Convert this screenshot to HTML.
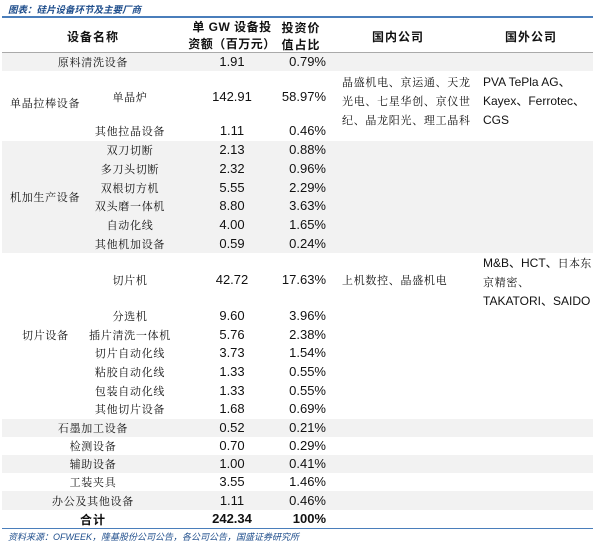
<!DOCTYPE html>
<html><head><meta charset="utf-8"><style>
body{margin:0;width:600px;height:546px;background:#fff;font-family:"Liberation Sans","Noto Sans CJK SC",sans-serif;font-size:12px;color:#111;position:relative;overflow:hidden}
.a{position:absolute;white-space:nowrap}
.g{position:absolute;left:2px;width:591px;background:#f2f2f2}
.c{transform:translateX(-50%)}
.r{transform:translateX(-100%)}
.cj{font-family:"Noto Serif CJK SC","Noto Sans CJK SC",serif;font-size:11px;letter-spacing:0.7px}
</style></head><body>
<div class="a" style="left:8px;top:2px;font-size:9.5px;color:#1f4e8c;font-style:italic;font-weight:bold;font-family:'Noto Sans CJK SC',sans-serif">图表：硅片设备环节及主要厂商</div>
<div style="position:absolute;left:2px;top:16px;width:591px;height:2px;background:#4a7ebb"></div>
<div style="position:absolute;left:2px;top:52px;width:591px;height:1px;background:#aaa"></div>
<div class="g" style="top:53px;height:18px"></div>
<div class="g" style="top:141px;height:112px"></div>
<div class="g" style="top:419px;height:18px"></div>
<div class="g" style="top:455px;height:18px"></div>
<div class="g" style="top:491px;height:19px"></div>
<div style="position:absolute;left:2px;top:528px;width:591px;height:1px;background:#4a7ebb"></div>
<div class="a c" style="left:93px;top:28px;font-weight:bold;letter-spacing:1px;font-family:'Noto Sans CJK SC',sans-serif">设备名称</div>
<div class="a c" style="left:232px;top:19px;font-weight:bold;line-height:17px;text-align:center;letter-spacing:0.5px;font-family:'Liberation Sans','Noto Sans CJK SC',sans-serif">单 GW 设备投<br>资额（百万元）</div>
<div class="a c" style="left:301px;top:19px;font-weight:bold;line-height:17px;text-align:center;letter-spacing:1px;font-family:'Noto Sans CJK SC',sans-serif">投资价<br>值占比</div>
<div class="a c" style="left:398px;top:28px;font-weight:bold;letter-spacing:1px;font-family:'Noto Sans CJK SC',sans-serif">国内公司</div>
<div class="a c" style="left:531px;top:28px;font-weight:bold;letter-spacing:1px;font-family:'Noto Sans CJK SC',sans-serif">国外公司</div>
<div id="rows"></div>
<div class="a cj" style="left:10px;top:95px">单晶拉棒设备</div>
<div class="a cj" style="left:10px;top:189px">机加生产设备</div>
<div class="a cj" style="left:22px;top:327px">切片设备</div>
<div class="a cj" style="left:342px;top:73px;line-height:19px">晶盛机电、京运通、天龙<br>光电、七星华创、京仪世<br>纪、晶龙阳光、理工晶科</div>
<div class="a" style="left:483px;top:73px;line-height:19px;font-size:12px">PVA TePla AG、<br>Kayex、Ferrotec、<br>CGS</div>
<div class="a cj" style="left:342px;top:272px">上机数控、晶盛机电</div>
<div class="a" style="left:483px;top:254px;line-height:19px;font-size:12px">M&amp;B、HCT、<span class="cj" style="letter-spacing:0.3px">日本东</span><br><span class="cj">京精密、</span><br>TAKATORI、SAIDO</div>
<div class="a" style="left:8px;top:530px;font-size:9px;color:#1f4e8c;font-style:italic;font-family:'Liberation Sans','Noto Sans CJK SC',sans-serif">资料来源：OFWEEK，隆基股份公司公告，各公司公告，国盛证券研究所</div>
<script>
var d=[[62,93,"原料清洗设备","1.91","0.79%"],[97,130,"单晶炉","142.91","58.97%"],[131,130,"其他拉晶设备","1.11","0.46%"],
[150,130,"双刀切断","2.13","0.88%"],[169,130,"多刀头切断","2.32","0.96%"],[188,130,"双根切方机","5.55","2.29%"],[206,130,"双头磨一体机","8.80","3.63%"],[225,130,"自动化线","4.00","1.65%"],[244,130,"其他机加设备","0.59","0.24%"],
[280,130,"切片机","42.72","17.63%"],[316,130,"分选机","9.60","3.96%"],[335,130,"插片清洗一体机","5.76","2.38%"],[353,130,"切片自动化线","3.73","1.54%"],[372,130,"粘胶自动化线","1.33","0.55%"],[391,130,"包装自动化线","1.33","0.55%"],[409,130,"其他切片设备","1.68","0.69%"],
[428,93,"石墨加工设备","0.52","0.21%"],[446,93,"检测设备","0.70","0.29%"],[464,93,"辅助设备","1.00","0.41%"],[482,93,"工装夹具","3.55","1.46%"],[501,93,"办公及其他设备","1.11","0.46%"]];
var h="";d.forEach(function(r){var t=r[0]-8;
h+='<div class="a c cj" style="left:'+r[1]+'px;top:'+(t)+'px">'+r[2]+'</div><div class="a c" style="left:232px;top:'+t+'px;font-size:13px">'+r[3]+'</div><div class="a r" style="left:326px;top:'+t+'px;font-size:13px">'+r[4]+'</div>';});
h+='<div class="a c" style="left:93px;top:511px;font-weight:bold;letter-spacing:1px;font-family:\'Noto Sans CJK SC\',sans-serif">合计</div><div class="a c" style="left:232px;top:511px;font-size:13px;font-weight:bold">242.34</div><div class="a r" style="left:326px;top:511px;font-size:13px;font-weight:bold">100%</div>';
document.getElementById("rows").innerHTML=h;
</script>
</body></html>
